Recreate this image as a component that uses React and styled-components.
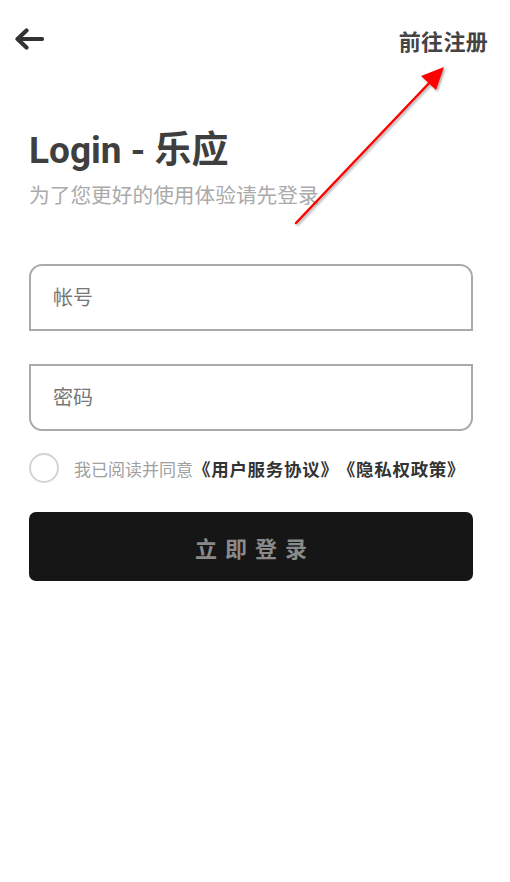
import React from 'react';
import styled, { createGlobalStyle } from 'styled-components';

const Global = createGlobalStyle`
  html, body {
    margin: 0;
    padding: 0;
    background: #fff;
  }
  body {
    font-family: Roboto, "Noto Sans CJK SC", sans-serif;
  }
`;

const Page = styled.div`
  position: relative;
  width: 510px;
  height: 882px;
  background: #fff;
  overflow: hidden;
`;

const Header = styled.div`
  display: flex;
  justify-content: space-between;
  align-items: center;
  height: 78px;
  padding: 0 22px 0 13px;
  box-sizing: border-box;
`;

const Back = styled.button`
  border: none;
  background: none;
  padding: 0;
  width: 31px;
  height: 24px;
  display: flex;
  align-items: center;
  cursor: pointer;
`;

const Register = styled.a`
  font-size: 22px;
  font-weight: 700;
  color: #444;
  letter-spacing: 0.3px;
  text-decoration: none;
  margin-top: 2px;
`;

const Body = styled.div`
  display: flex;
  flex-direction: column;
  padding: 0 37px 0 29px;
`;

const Title = styled.h1`
  margin: 50px 0 0 0;
  font-size: 37px;
  line-height: 46px;
  font-weight: 700;
  color: #3f3f3f;
`;

const Subtitle = styled.p`
  margin: 8px 0 0 0;
  font-size: 20.7px;
  line-height: 28px;
  color: #aaa;
`;

const Field = styled.div`
  height: 67px;
  border: 2px solid #aaa;
  box-sizing: border-box;
  border-radius: ${(p) => (p.top ? '13px 13px 0 0' : '0 0 13px 13px')};
  display: flex;
  align-items: center;
  padding-left: 20px;
  margin-top: ${(p) => p.gap}px;
`;

const Input = styled.input`
  border: none;
  outline: none;
  background: none;
  width: 100%;
  font-family: inherit;
  font-size: 20px;
  color: #333;
  &::placeholder {
    color: #777;
  }
`;

const Agree = styled.div`
  display: flex;
  align-items: center;
  margin-top: 21px;
  height: 32px;
`;

const Circle = styled.span`
  width: 26px;
  height: 26px;
  border: 2px solid #d4d4d4;
  border-radius: 50%;
  flex-shrink: 0;
`;

const AgreeText = styled.span`
  margin-left: 15px;
  font-size: 17px;
  color: #a0a0a0;
  white-space: nowrap;
`;

const Link = styled.b`
  color: #333;
  font-weight: 700;
  font-size: 17.5px;
  letter-spacing: 0.7px;
  margin-left: ${(p) => p.gap || 0}px;
`;

const Submit = styled.button`
  margin-top: 28px;
  height: 69px;
  border: none;
  border-radius: 7px;
  background: #161616;
  color: #8a8a8a;
  font-family: inherit;
  font-size: 22px;
  font-weight: 700;
  letter-spacing: 8px;
  text-indent: 8px;
  cursor: pointer;
`;

const Annotation = styled.svg`
  position: absolute;
  left: 0;
  top: 0;
  pointer-events: none;
`;

const App = () => {
  return (
    <Page>
      <Global />
      <Header>
        <Back>
          <svg width="31" height="24" viewBox="0 0 31 24">
            <path d="M29 12 H5 M13.5 3.5 L4.5 12 L13.5 20.5" fill="none" stroke="#333" strokeWidth="4.2" strokeLinecap="round" strokeLinejoin="round" />
          </svg>
        </Back>
        <Register href="#">前往注册</Register>
      </Header>
      <Body>
        <Title>Login - 乐应</Title>
        <Subtitle>为了您更好的使用体验请先登录</Subtitle>
        <Field top gap={54}>
          <Input placeholder="帐号" />
        </Field>
        <Field gap={33}>
          <Input type="password" placeholder="密码" />
        </Field>
        <Agree>
          <Circle />
          <AgreeText>
            我已阅读并同意<Link>《用户服务协议》</Link><Link gap={8}>《隐私权政策》</Link>
          </AgreeText>
        </Agree>
        <Submit>立即登录</Submit>
      </Body>
      <Annotation width="510" height="882">
        <defs>
          <filter id="sh" x="-20%" y="-20%" width="140%" height="140%">
            <feDropShadow dx="1.5" dy="1.5" stdDeviation="1.2" floodColor="#000" floodOpacity="0.35" />
          </filter>
        </defs>
        <g filter="url(#sh)">
          <line x1="296" y1="223" x2="433" y2="79" stroke="#f00" strokeWidth="2.5" strokeLinecap="round" />
          <polygon points="444,67 436,90 421,76" fill="#f00" />
        </g>
      </Annotation>
    </Page>
  );
};

export default App;
